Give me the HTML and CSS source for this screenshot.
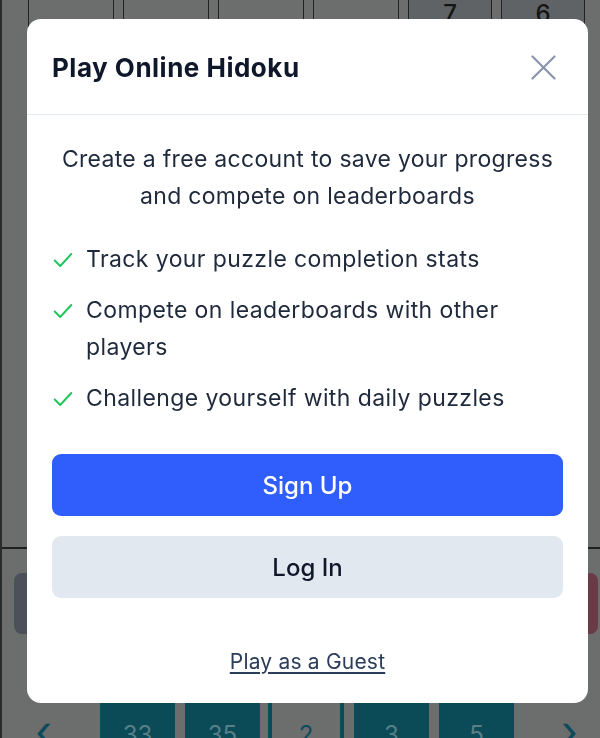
FILE: index.html
```html
<!DOCTYPE html>
<html lang="en">
<head>
<meta charset="utf-8">
<title>Play Online Hidoku</title>
<link rel="stylesheet" href="styles.css">
</head>
<body>
<div class="page">
  <div class="board">
    <div class="row">
      <div class="cell"></div>
      <div class="cell"></div>
      <div class="cell"></div>
      <div class="cell"></div>
      <div class="cell given">7</div>
      <div class="cell given">6</div>
    </div>
  </div>
  <div class="controls">
    <div class="ctrl ctrl-slate"></div>
    <div class="ctrl ctrl-red"></div>
  </div>
  <div class="strip">
    <span class="arrow">&#8249;</span>
    <div class="chips">
      <div class="chip">33</div>
      <div class="chip">35</div>
      <div class="chip chip-sel">2</div>
      <div class="chip">3</div>
      <div class="chip">5</div>
    </div>
    <span class="arrow arrow-right">&#8250;</span>
  </div>
</div>

<div class="overlay">
  <div class="modal">
    <div class="modal-header">
      <h2 class="modal-title">Play Online Hidoku</h2>
      <button class="close" aria-label="Close">
        <svg width="25" height="25" viewBox="0 0 25 25" fill="none" stroke="currentColor" stroke-width="2.2" stroke-linecap="round"><path d="M1.5 1.5 23.5 23.5M23.5 1.5 1.5 23.5"/></svg>
      </button>
    </div>
    <div class="modal-body">
      <p class="intro">Create a free account to save your progress and compete on leaderboards</p>
      <ul class="features">
        <li><svg class="check" width="22" height="22" viewBox="0 0 24 24" fill="none" stroke="currentColor" stroke-width="2.2" stroke-linecap="round" stroke-linejoin="round"><path d="M3 12.5l6 6 12-13"/></svg><span>Track your puzzle completion stats</span></li>
        <li><svg class="check" width="22" height="22" viewBox="0 0 24 24" fill="none" stroke="currentColor" stroke-width="2.2" stroke-linecap="round" stroke-linejoin="round"><path d="M3 12.5l6 6 12-13"/></svg><span>Compete on leaderboards with other players</span></li>
        <li><svg class="check" width="22" height="22" viewBox="0 0 24 24" fill="none" stroke="currentColor" stroke-width="2.2" stroke-linecap="round" stroke-linejoin="round"><path d="M3 12.5l6 6 12-13"/></svg><span>Challenge yourself with daily puzzles</span></li>
      </ul>
      <div class="actions">
        <button class="btn btn-primary">Sign Up</button>
        <button class="btn btn-secondary">Log In</button>
      </div>
      <a class="guest" href="#">Play as a Guest</a>
    </div>
  </div>
</div>
</body>
</html>
```

FILE: styles.css
```css
* { box-sizing: border-box; }
html, body { margin: 0; padding: 0; }
body {
  width: 600px;
  height: 738px;
  overflow: hidden;
  background: #6c6e6e;
  font-family: Inter, "Noto Sans", "Liberation Sans", sans-serif;
}

.page {
  display: flex;
  flex-direction: column;
  height: 738px;
  border-left: 2px solid #2a2b2b;
  width: 640px;
}

.board {
  height: 549px;
  border-bottom: 2px solid #1f2020;
  padding-left: 26px;
  flex: none;
}
.row { display: flex; gap: 9px; }
.cell {
  width: 86px;
  height: 86px;
  border: 1.5px solid #222;
  border-top: none;
  flex: none;
  display: flex;
  justify-content: center;
  padding-top: 2px;
  font-size: 24px;
  line-height: 24px;
  color: #151515;
  font-weight: 500;
}
.cell.given { background: #5f6366; width: 84px; }

.controls {
  display: flex;
  justify-content: space-between;
  padding: 24px 0 0 12px;
  height: 150px;
  flex: none;
}
.ctrl { width: 120px; height: 61px; border-radius: 8px; }
.ctrl-slate { background: #4b5059; }
.ctrl-red { background: #6a3b46; margin-right: 42px; }

.strip {
  display: flex;
  align-items: flex-start;
  width: 600px;
  height: 60px;
  flex: none;
}
.arrow {
  color: #0d4b5c;
  font-size: 44px;
  line-height: 40px;
  width: 98px;
  padding-left: 33px;
  margin-top: 12px;
}
.arrow-right { padding-left: 47px; width: auto; }
.chips { display: flex; gap: 10px; height: 60px; }
.chip {
  width: 75px;
  background: #0b4a57;
  color: #577f86;
  font-size: 24px;
  line-height: 29px;
  display: flex;
  justify-content: center;
  padding-top: 21px;
}
.chip-sel {
  background: #6c6e6e;
  width: 76px;
  border-left: 4px solid #0b4a57;
  border-right: 4px solid #0b4a57;
  color: #0d4b5c;
  margin-left: -2px;
}

.overlay {
  position: fixed;
  inset: 0;
  padding: 19px 12px 0 27px;
}
.modal {
  width: 561px;
  height: 684px;
  background: #ffffff;
  border-radius: 14px;
  display: flex;
  flex-direction: column;
  overflow: hidden;
}
.modal-header {
  height: 96px;
  border-bottom: 1px solid #e2e8f0;
  display: flex;
  align-items: center;
  justify-content: space-between;
  padding: 0 32px 0 25px;
  flex: none;
}
.modal-title {
  margin: 0;
  font-size: 26px;
  font-weight: 700;
  color: #0f172a;
  letter-spacing: 0.5px;
  padding-top: 2px;
}
.close {
  border: 0;
  background: none;
  padding: 0;
  color: #8796ab;
  display: flex;
  margin-top: 1px;
}

.modal-body {
  padding: 26px 25px 0;
  display: flex;
  flex-direction: column;
  color: #1e293b;
}
.intro {
  margin: 0;
  text-align: center;
  font-size: 23px;
  line-height: 37px;
  letter-spacing: 0.3px;
}
.features {
  list-style: none;
  margin: 26px 0 0;
  padding: 0;
  display: flex;
  flex-direction: column;
  gap: 14px;
}
.features li {
  display: flex;
  gap: 12px;
  font-size: 23px;
  line-height: 37px;
  letter-spacing: 0.4px;
  align-items: flex-start;
}
.check {
  color: #22c55e;
  flex: none;
  margin-top: 8px;
}
.actions {
  display: flex;
  flex-direction: column;
  gap: 20px;
  margin-top: 37px;
}
.btn {
  height: 62px;
  border: 0;
  border-radius: 9px;
  font-family: inherit;
  font-size: 24px;
  font-weight: 500;
  width: 100%;
}
.btn-primary { background: #305efd; color: #ffffff; }
.btn-secondary { background: #e2e8f0; color: #0f172a; }

.guest {
  align-self: center;
  margin-top: 50px;
  font-size: 21px;
  letter-spacing: 0.2px;
  color: #2b3d5a;
  text-decoration: underline;
  text-underline-offset: 3px;
  line-height: 28px;
}
```
